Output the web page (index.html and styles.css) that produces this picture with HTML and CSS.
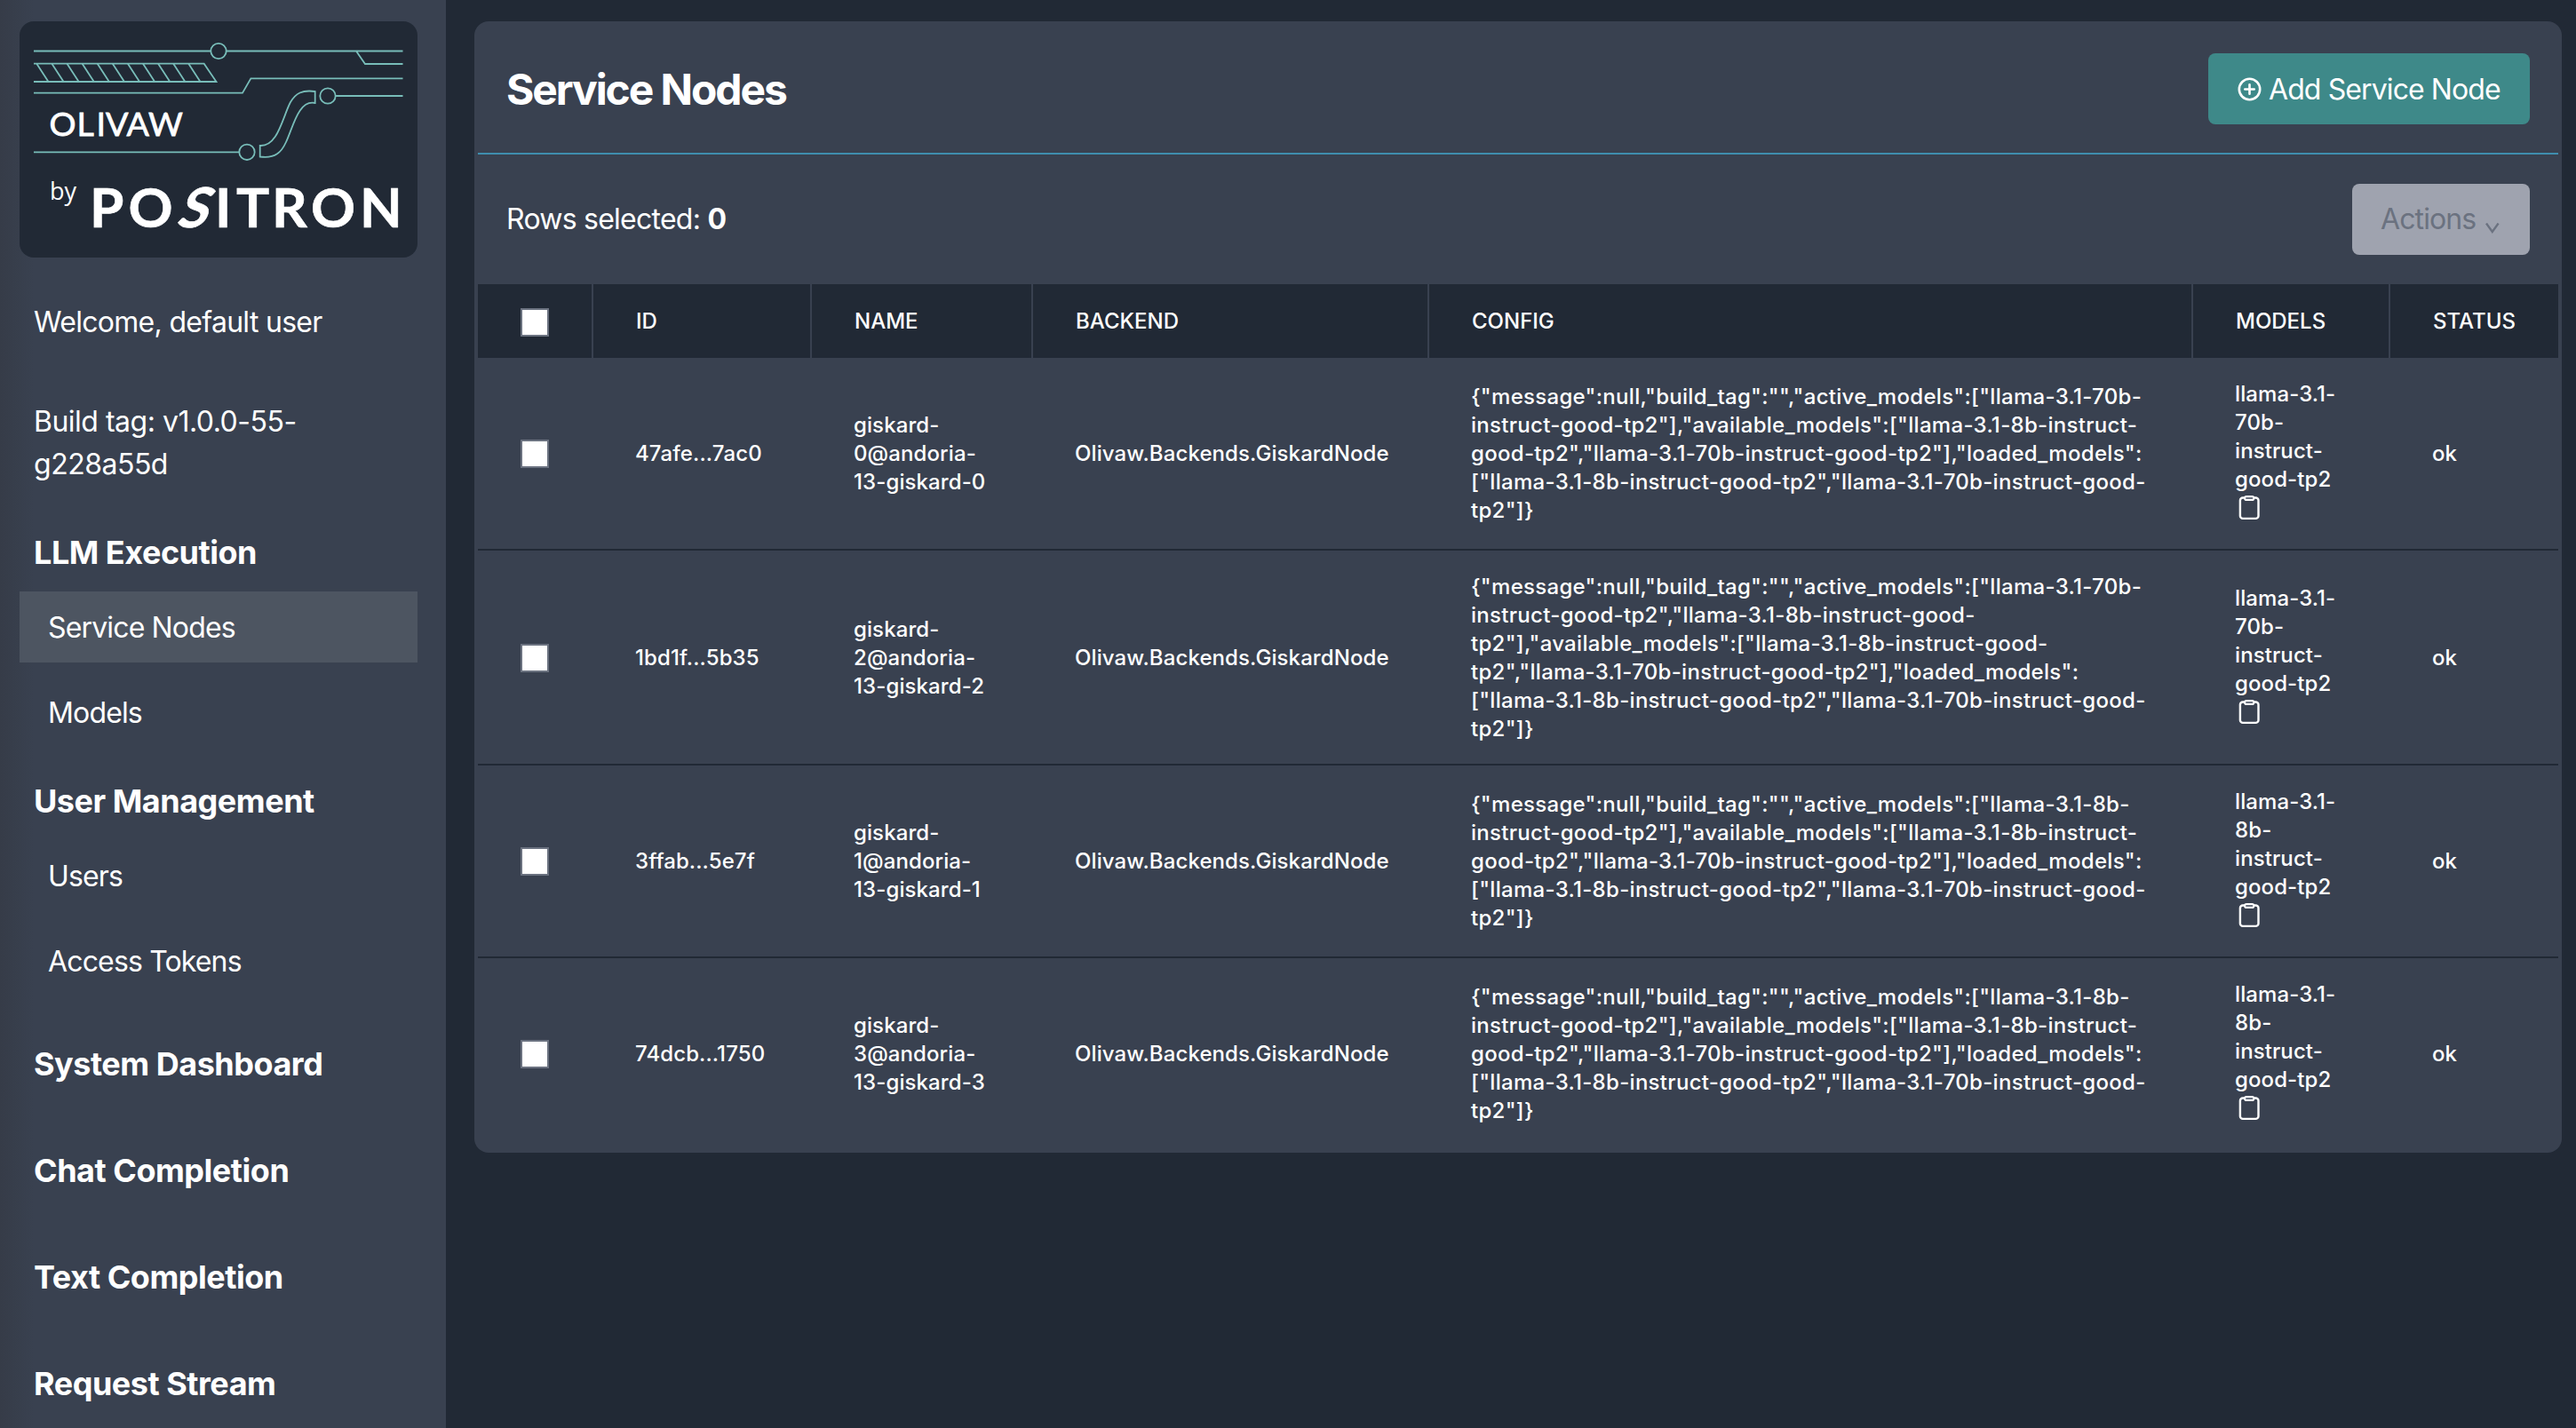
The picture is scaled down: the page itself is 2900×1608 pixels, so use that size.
FILE: index.html
```html
<!DOCTYPE html>
<html lang="en">

<head>
    <meta charset="utf-8">
    <meta name="viewport" content="width=device-width, initial-scale=1.0">
    <title>Service Nodes</title>
    <link rel="stylesheet" href="styles.css">
</head>

<body>
    <!-- shared icons -->
    <svg width="0" height="0" class="defs">
        <symbol id="clipboard" viewBox="0 0 32 32">
            <rect x="4.9" y="4.5" width="20.6" height="23.4" rx="3" />
            <rect class="clip" x="10" y="2.9" width="10.4" height="4.2" rx="2.1" />
        </symbol>
    </svg>

    <aside class="sidebar">
        <svg class="logo" viewBox="0 0 448 266">
            <g class="circuit">
                <path d="M16 33.5H215M233 33.5H431.500M379 33.5L389 48H431.500" />
                <circle cx="224" cy="33.5" r="8.700" />
                <path d="M16 47.700H207.700L221.500 68H16" />
                <path d="M19.300 47.700l13 20M36.400 47.700l13 20M53.500 47.700l13 20M70.600 47.700l13 20M87.700 47.700l13 20M104.800 47.700l13 20M121.900 47.700l13 20M139 47.700l13 20M156.100 47.700l13 20M173.200 47.700l13 20M190.300 47.700l13 20" />
                <path d="M16 80.700H251L260.400 64.300H431.500" />
                <circle cx="347" cy="84" r="8.700" />
                <path d="M356 84H431.500M16 147.300H247" />
                <circle cx="256" cy="147.300" r="8.700" />
                <path d="M332.700 79C318 77 311 81 305 91C296 108 291 141 270.700 140V152.500C288 155 295 147 300 136C308 119 314 88 332.700 92Z" />
            </g>
            <text class="olivaw" y="129" x="33.500 64.500 86.500 97 120.500 145">OLIVAW</text>
            <text class="by" x="34" y="201">by</text>
            <text class="positron" y="232" x="79 122.500">PO</text>
            <text class="positron" transform="translate(175 232) skewX(-20)">S</text>
            <text class="positron" y="232" x="220 244 284 328 383">ITRON</text>
        </svg>

        <p class="info">Welcome, default user</p>
        <p class="info build">Build tag: v1.0.0-55-<br>g228a55d</p>

        <nav>
            <h2>LLM Execution</h2>
            <ul>
                <li class="active">Service Nodes</li>
                <li>Models</li>
            </ul>
            <h2>User Management</h2>
            <ul>
                <li>Users</li>
                <li>Access Tokens</li>
            </ul>
            <h2 class="single">System Dashboard</h2>
            <h2 class="single">Chat Completion</h2>
            <h2 class="single">Text Completion</h2>
            <h2 class="single">Request Stream</h2>
        </nav>
    </aside>

    <main>
        <section class="card">
            <header>
                <h1>Service Nodes</h1>
                <button class="add">
                    <svg width="27" height="27" viewBox="0 0 27 27">
                        <circle cx="13.500" cy="13.500" r="11.700" />
                        <path d="M13.500 8.300V18.700M8.300 13.500H18.700" />
                    </svg>
                    <span>Add Service Node</span>
                </button>
            </header>

            <div class="toolbar">
                <span class="selected">Rows selected: <b>0</b></span>
                <button class="actions" disabled>
                    Actions
                    <svg width="16" height="12" viewBox="0 0 16 12">
                        <path d="M1 0.500L7.800 10L14.600 0.500" />
                    </svg>
                </button>
            </div>

            <table>
                <colgroup>
                    <col class="c-check">
                    <col class="c-id">
                    <col class="c-name">
                    <col class="c-backend">
                    <col class="c-config">
                    <col class="c-models">
                    <col class="c-status">
                </colgroup>
                <thead>
                    <tr>
                        <th><input type="checkbox"></th>
                        <th>ID</th>
                        <th>NAME</th>
                        <th>BACKEND</th>
                        <th>CONFIG</th>
                        <th>MODELS</th>
                        <th>STATUS</th>
                    </tr>
                </thead>
                <tbody>
                    <tr>
                        <td><input type="checkbox"></td>
                        <td>47afe...7ac0</td>
                        <td>giskard-<br>0@andoria-<br>13-giskard-0</td>
                        <td>Olivaw.Backends.GiskardNode</td>
                        <td class="config">{"message":null,"build_tag":"","active_models":["llama-3.1-70b-<br>instruct-good-tp2"],"available_models":["llama-3.1-8b-instruct-<br>good-tp2","llama-3.1-70b-instruct-good-tp2"],"loaded_models":<br>["llama-3.1-8b-instruct-good-tp2","llama-3.1-70b-instruct-good-<br>tp2"]}</td>
                        <td>llama-3.1-<br>70b-<br>instruct-<br>good-tp2<svg class="copy"><use href="#clipboard" /></svg></td>
                        <td>ok</td>
                    </tr>
                    <tr class="tall">
                        <td><input type="checkbox"></td>
                        <td>1bd1f...5b35</td>
                        <td>giskard-<br>2@andoria-<br>13-giskard-2</td>
                        <td>Olivaw.Backends.GiskardNode</td>
                        <td class="config">{"message":null,"build_tag":"","active_models":["llama-3.1-70b-<br>instruct-good-tp2","llama-3.1-8b-instruct-good-<br>tp2"],"available_models":["llama-3.1-8b-instruct-good-<br>tp2","llama-3.1-70b-instruct-good-tp2"],"loaded_models":<br>["llama-3.1-8b-instruct-good-tp2","llama-3.1-70b-instruct-good-<br>tp2"]}</td>
                        <td>llama-3.1-<br>70b-<br>instruct-<br>good-tp2<svg class="copy"><use href="#clipboard" /></svg></td>
                        <td>ok</td>
                    </tr>
                    <tr>
                        <td><input type="checkbox"></td>
                        <td>3ffab...5e7f</td>
                        <td>giskard-<br>1@andoria-<br>13-giskard-1</td>
                        <td>Olivaw.Backends.GiskardNode</td>
                        <td class="config">{"message":null,"build_tag":"","active_models":["llama-3.1-8b-<br>instruct-good-tp2"],"available_models":["llama-3.1-8b-instruct-<br>good-tp2","llama-3.1-70b-instruct-good-tp2"],"loaded_models":<br>["llama-3.1-8b-instruct-good-tp2","llama-3.1-70b-instruct-good-<br>tp2"]}</td>
                        <td>llama-3.1-<br>8b-<br>instruct-<br>good-tp2<svg class="copy"><use href="#clipboard" /></svg></td>
                        <td>ok</td>
                    </tr>
                    <tr>
                        <td><input type="checkbox"></td>
                        <td>74dcb...1750</td>
                        <td>giskard-<br>3@andoria-<br>13-giskard-3</td>
                        <td>Olivaw.Backends.GiskardNode</td>
                        <td class="config">{"message":null,"build_tag":"","active_models":["llama-3.1-8b-<br>instruct-good-tp2"],"available_models":["llama-3.1-8b-instruct-<br>good-tp2","llama-3.1-70b-instruct-good-tp2"],"loaded_models":<br>["llama-3.1-8b-instruct-good-tp2","llama-3.1-70b-instruct-good-<br>tp2"]}</td>
                        <td>llama-3.1-<br>8b-<br>instruct-<br>good-tp2<svg class="copy"><use href="#clipboard" /></svg></td>
                        <td>ok</td>
                    </tr>
                </tbody>
            </table>
        </section>
    </main>
</body>

</html>
```
FILE: styles.css
```css
* {
    box-sizing: border-box;
}

body {
    margin: 0;
    height: 1608px;
    overflow: hidden;
    display: flex;
    background-color: #212935;
    color: #fff;
    font-family: Inter, "Liberation Sans", sans-serif;
    font-size: 32px;
    line-height: 48px;
    letter-spacing: -0.68px;
}

h1,
h2,
p,
ul {
    margin: 0;
    padding: 0;
}

svg {
    fill: none;
    stroke: currentColor;
}

.defs {
    position: absolute;
}

/* sidebar */
.sidebar {
    width: 502px;
    flex-shrink: 0;
    padding: 24px 32px 0 22px;
    background: linear-gradient(90deg, #363c48, #394150 38px);
}

.logo {
    display: block;
    width: 448px;
    height: 266px;
    border-radius: 16px;
    background-color: #212935;
}

.circuit {
    stroke: #78bdb9;
    stroke-width: 1.8;
}

.logo text {
    fill: #fff;
    stroke: none;
    letter-spacing: 0;
}

.logo .olivaw {
    font-family: Lato, sans-serif;
    font-size: 37.5px;
    stroke: #fff;
    stroke-width: 0.8;
}

.by {
    font-family: "Open Sans", sans-serif;
    font-size: 27px;
}

.logo .positron {
    font-family: Lato, sans-serif;
    font-size: 62px;
    font-weight: bold;
    stroke: #fff;
    stroke-width: 0.6;
}

.info {
    margin-top: 49px;
    padding-left: 16px;
    letter-spacing: -0.7px;
}

.build {
    margin-top: 64px;
    letter-spacing: -0.5px;
}

h2 {
    margin-top: 47px;
    margin-bottom: 16px;
    padding-left: 16px;
    font-size: 36px;
    line-height: 56px;
    font-weight: bold;
    letter-spacing: -0.48px;
}

ul + h2 {
    margin-top: 32px;
}

ul + .single {
    margin-top: 48px;
}

.single {
    margin-top: 64px;
    margin-bottom: 0;
}

ul {
    list-style: none;
}

li {
    height: 80px;
    padding: 17px 32px 15px;
    letter-spacing: -0.85px;
}

li + li {
    margin-top: 16px;
}

.active {
    background-color: #4d5561;
}

/* content */
main {
    flex: 1;
    padding: 24px 16px 0 32px;
}

.card {
    height: 1274px;
    padding: 0 4px;
    border-radius: 16px;
    background-color: #394150;
}

header,
.toolbar {
    display: flex;
    justify-content: space-between;
    align-items: center;
    padding: 0 32px;
}

header {
    height: 150px;
    border-bottom: 2px solid #3f8eae;
    padding-top: 4px;
}

.toolbar {
    height: 146px;
    padding-bottom: 1px;
}

h1 {
    padding-top: 1px;
    font-size: 48px;
    font-weight: bold;
    letter-spacing: -2.1px;
}

.selected {
    padding-top: 1px;
    letter-spacing: -0.75px;
}

button {
    display: flex;
    align-items: center;
    height: 80px;
    border: none;
    border-radius: 8px;
    font: inherit;
    letter-spacing: -0.9px;
}

.add {
    width: 362px;
    padding: 0 0 0 33px;
    gap: 8px;
    background-color: #3e8989;
    color: #fff;
}

.add span {
    padding-top: 2px;
}

.add svg {
    stroke-width: 2.6;
    stroke-linecap: round;
}

.actions {
    width: 200px;
    padding: 1px 0 0 32px;
    gap: 11px;
    background-color: #9fa3af;
    color: #6b7280;
}

.actions svg {
    margin-top: 20px;
    stroke-width: 2.4;
}

/* table */
table {
    width: 2342px;
    table-layout: fixed;
    border-collapse: separate;
    border-spacing: 0;
    font-size: 24px;
    line-height: 32px;
}

.c-check {
    width: 130px;
}

.c-id {
    width: 246px;
}

.c-name {
    width: 249px;
}

.c-backend {
    width: 446px;
}

.c-config {
    width: 860px;
}

.c-models {
    width: 222px;
}

.c-status {
    width: 189px;
}

th {
    height: 83px;
    padding: 0 46px 0 48px;
    border-right: 2px solid #394150;
    background-color: #212935;
    text-align: left;
    font-weight: 500;
    letter-spacing: 0;
}

th:last-child {
    border-right: none;
}

td {
    height: 217px;
    padding: 1px 0 0 47px;
    border-bottom: 2px solid #212935;
    font-weight: 500;
    white-space: nowrap;
    letter-spacing: 0.1px;
}

td:first-child {
    padding-left: 48px;
}

.tall td {
    height: 242px;
    padding-top: 2px;
}

tr:last-child td {
    height: 215px;
    border-bottom: none;
}

.config {
    letter-spacing: 0.3px;
}

input {
    appearance: none;
    display: block;
    width: 32px;
    height: 32px;
    margin: 0;
    border: 2px solid #6b7280;
    background-color: #fff;
}

th input {
    margin-top: 3px;
}

.copy {
    display: block;
    width: 32px;
    height: 32px;
    margin-left: 1px;
    margin-bottom: 6px;
    stroke-width: 2.4;
}

.clip {
    fill: #6b7280;
    stroke-width: 2;
}
```
